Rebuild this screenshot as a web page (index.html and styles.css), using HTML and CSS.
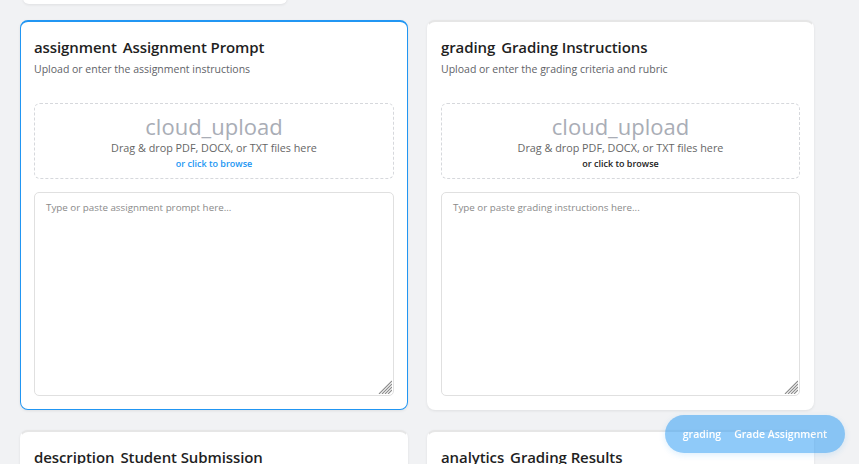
FILE: index.html
```html
<!DOCTYPE html>
<html lang="en">
<head>
<meta charset="utf-8">
<title>Grader</title>
<link rel="stylesheet" href="styles.css">
</head>
<body>
<div class="page">
  <div class="top-card"></div>
  <div class="grid">
    <section class="card active">
      <h2 class="card-title"><span class="ico">assignment</span>Assignment Prompt</h2>
      <p class="card-sub">Upload or enter the assignment instructions</p>
      <div class="dropzone">
        <div class="dz-icon">cloud_upload</div>
        <div class="dz-text">Drag &amp; drop PDF, DOCX, or TXT files here</div>
        <div class="dz-link blue">or click to browse</div>
      </div>
      <div class="field">
        <textarea class="input" placeholder="Type or paste assignment prompt here..."></textarea>
        <svg class="grip" width="14" height="14" viewBox="0 0 14 14"><path d="M1 14L14 1M4 14L14 4M7 14L14 7M10 14L14 10" stroke="#8c8c8c" stroke-width="1.1"/></svg>
      </div>
    </section>
    <section class="card">
      <h2 class="card-title"><span class="ico">grading</span>Grading Instructions</h2>
      <p class="card-sub">Upload or enter the grading criteria and rubric</p>
      <div class="dropzone">
        <div class="dz-icon">cloud_upload</div>
        <div class="dz-text">Drag &amp; drop PDF, DOCX, or TXT files here</div>
        <div class="dz-link dark">or click to browse</div>
      </div>
      <div class="field">
        <textarea class="input" placeholder="Type or paste grading instructions here..."></textarea>
        <svg class="grip" width="14" height="14" viewBox="0 0 14 14"><path d="M1 14L14 1M4 14L14 4M7 14L14 7M10 14L14 10" stroke="#8c8c8c" stroke-width="1.1"/></svg>
      </div>
    </section>
    <section class="card">
      <h2 class="card-title"><span class="ico">description</span>Student Submission</h2>
    </section>
    <section class="card">
      <h2 class="card-title"><span class="ico">analytics</span>Grading Results</h2>
    </section>
  </div>
</div>
<button class="fab" disabled><span class="fab-ico">grading</span>Grade Assignment</button>
</body>
</html>
```
FILE: styles.css
```css
* { box-sizing: border-box; }
html, body { margin: 0; padding: 0; }
body {
  background: #f1f2f4;
  font-family: "Open Sans", "Noto Sans", sans-serif;
  color: #222;
  overflow: hidden;
  height: 464px;
}
.page {
  padding: 0 20px;
  margin-top: -36px;
}
.top-card {
  width: 264px;
  height: 40px;
  margin-left: 3px;
  background: #fff;
  border-radius: 0 0 6px 6px;
  box-shadow: 0 1px 3px rgba(0,0,0,0.08);
}
.grid {
  margin-top: 16px;
  display: grid;
  grid-template-columns: 388px 387px;
  column-gap: 19px;
  row-gap: 20px;
}
.card {
  background: #fff;
  border-radius: 8px;
  border: 1px solid transparent;
  border-top: 2px solid #e6e6e6;
  box-shadow: 0 1px 3px rgba(0,0,0,0.08);
  padding: 12px 13px 13px;
  display: flex;
  flex-direction: column;
}
.card.active {
  border-color: #2196f3;
}
.card-title {
  margin: 0;
  font-size: 15px;
  line-height: 26px;
  font-weight: 600;
  color: #1f1f1f;
  white-space: nowrap;
  letter-spacing: -0.1px;
}
.ico { margin-right: 6px; }
.card-sub {
  margin: 2px 0 0;
  font-size: 10.5px;
  line-height: 14px;
  color: #5f6368;
}
.dropzone {
  margin-top: 27px;
  border: 1px dashed #d6d8dc;
  border-radius: 6px;
  padding: 8px 10px 7px;
  text-align: center;
  display: flex;
  flex-direction: column;
}
.dz-icon {
  font-size: 22px;
  line-height: 29px;
  color: #a9adb6;
}
.dz-text {
  font-size: 10.8px;
  line-height: 14px;
  color: #666;
}
.dz-link {
  margin-top: 2px;
  font-size: 9px;
  line-height: 14px;
  font-weight: 600;
}
.dz-link.blue { color: #2196f3; }
.dz-link.dark { color: #222; }
.field {
  position: relative;
  margin-top: 13px;
  height: 204px;
}
.input {
  display: block;
  height: 100%;
  width: 100%;
  border: 1px solid #e0e0e0;
  border-radius: 5px;
  padding: 8px 11px;
  font-family: "Open Sans", "Noto Sans", sans-serif;
  font-size: 9.8px;
  line-height: 14px;
  color: #333;
  background: #fff;
  resize: none;
  margin: 0;
}
.input::placeholder { color: #8a8a8a; }
.grip {
  position: absolute;
  right: 2px;
  bottom: 2px;
  pointer-events: none;
}
.fab {
  position: fixed;
  right: 14px;
  bottom: 11px;
  width: 180px;
  height: 38px;
  border: none;
  border-radius: 19px;
  background: #2196f3;
  color: #fff;
  opacity: 0.5;
  font-family: "Open Sans", "Noto Sans", sans-serif;
  font-size: 10.5px;
  font-weight: 600;
  display: flex;
  align-items: center;
  justify-content: center;
  padding: 0;
  box-shadow: 0 2px 6px rgba(33,150,243,0.3);
}
.fab-ico { margin-right: 13px; }
```
